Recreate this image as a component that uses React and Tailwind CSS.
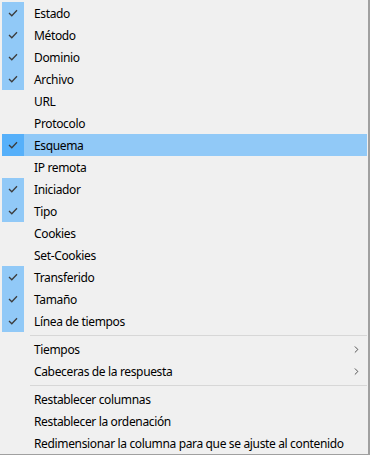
import { ChevronRight } from 'lucide-react';

const columns = [
  { label: 'Estado', checked: true },
  { label: 'Método', checked: true },
  { label: 'Dominio', checked: true },
  { label: 'Archivo', checked: true },
  { label: 'URL' },
  { label: 'Protocolo' },
  { label: 'Esquema', checked: true, active: true },
  { label: 'IP remota' },
  { label: 'Iniciador', checked: true },
  { label: 'Tipo', checked: true },
  { label: 'Cookies' },
  { label: 'Set-Cookies' },
  { label: 'Transferido', checked: true },
  { label: 'Tamaño', checked: true },
  { label: 'Línea de tiempos', checked: true },
];

function Check() {
  return (
    <svg width="10" height="8" viewBox="0 0 10 8" fill="none">
      <path d="M1 4l2.8 2.8L9 1.2" stroke="#3c3c3c" strokeWidth="1.3" />
    </svg>
  );
}

function Item({ label, checked, active, submenu }) {
  return (
    <div className={`flex h-[22px] items-center ${active ? 'bg-[#91c9f7]' : ''}`}>
      <div
        className={`flex h-full w-[22px] shrink-0 items-center justify-center ${
          checked ? (active ? 'bg-[#56b0fa]' : 'bg-[#91c9f7]') : ''
        }`}
      >
        {checked && <Check />}
      </div>
      <span className="ml-[10px] flex-1 pt-px tracking-[-0.35px] text-black">{label}</span>
      {submenu && <ChevronRight size={11} strokeWidth={1.8} className="mr-[5px] text-[#333]" />}
    </div>
  );
}

function Separator() {
  return (
    <div className="flex h-[6px] items-center pl-[28px]">
      <div className="h-px w-full bg-[#d7d7d7]" />
    </div>
  );
}

export default function App() {
  return (
    <div
      className="flex h-[455px] w-[370px] flex-col border-r-2 border-b border-[#a0a0a0] bg-[#f0f0f0] pt-[2px] pr-px pl-[2px] text-[12px] leading-none"
      style={{ fontFamily: '"Noto Sans", "Liberation Sans", sans-serif' }}
    >
      {columns.map((c) => (
        <Item key={c.label} {...c} />
      ))}
      <Separator />
      <Item label="Tiempos" submenu />
      <Item label="Cabeceras de la respuesta" submenu />
      <Separator />
      <Item label="Restablecer columnas" />
      <Item label="Restablecer la ordenación" />
      <Item label="Redimensionar la columna para que se ajuste al contenido" />
    </div>
  );
}
